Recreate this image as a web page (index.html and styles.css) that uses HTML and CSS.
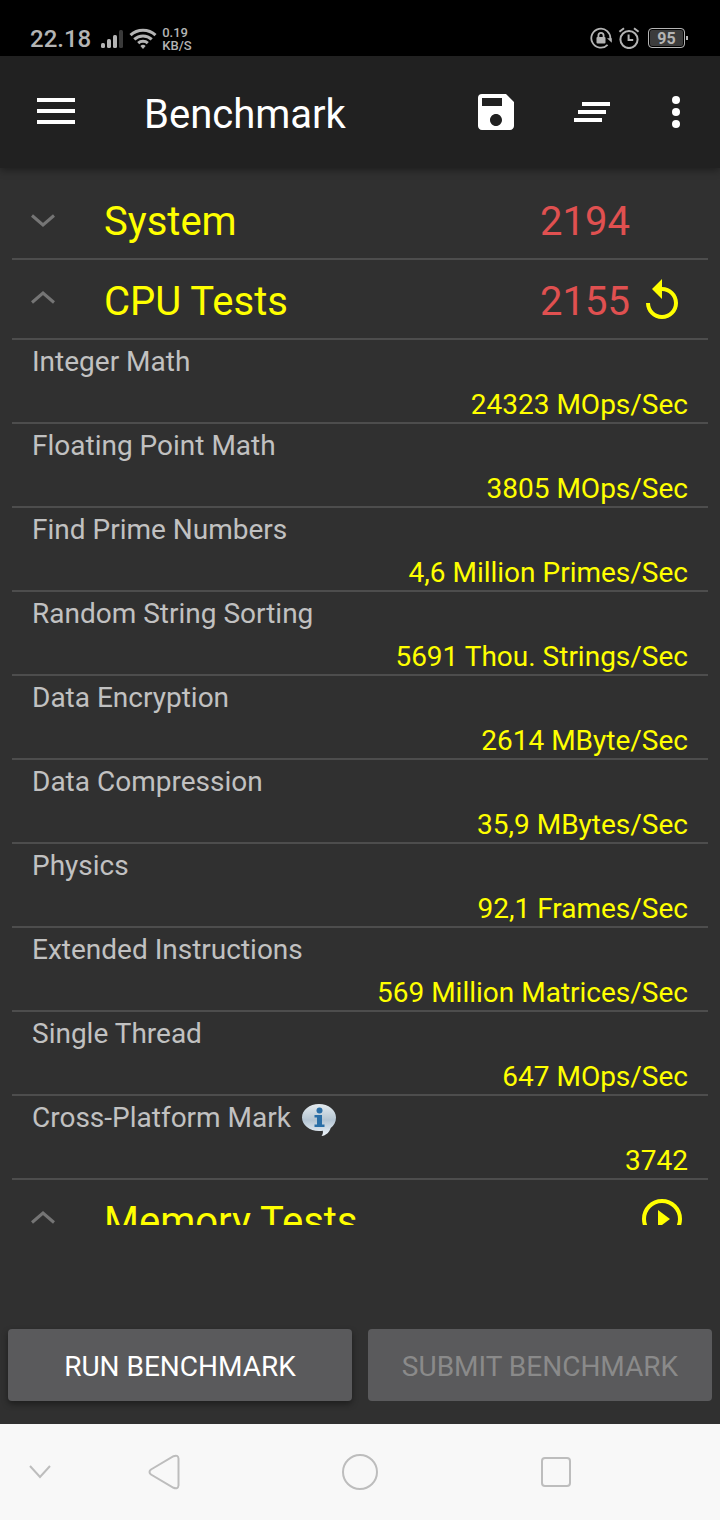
FILE: index.html
```html
<!DOCTYPE html>
<html lang="en">
  <head>
    <meta charset="UTF-8" />
    <meta name="viewport" content="width=device-width, initial-scale=1" />
    <title>Benchmark</title>
    <link rel="stylesheet" href="styles.css">
  </head>
  <body>
    <!-- Status bar -->
    <div class="status-bar">
      <div class="status-left">
        <span class="clock">22.18</span>
        <svg class="signal" width="24" height="20" viewBox="0 0 24 20" fill="#b4b4b4">
          <rect x="1" y="14" width="4" height="5" rx="1.5" />
          <rect x="7" y="10" width="4" height="9" rx="1.5" />
          <rect x="13" y="6" width="4" height="13" rx="1.5" />
          <rect x="19" y="1" width="4" height="18" rx="1.5" fill="#3a3a3a" />
        </svg>
        <svg class="wifi" width="28" height="22" viewBox="0 0 28 22" fill="none" stroke="#b4b4b4" stroke-width="3">
          <path d="M1.5 7.2a18 18 0 0 1 25 0" />
          <path d="M5.3 11.4a12.6 12.6 0 0 1 17.4 0" />
          <path d="M9.2 15.2a7 7 0 0 1 9.6 0" />
          <path d="M14 21l-2.6-3a3.6 3.6 0 0 1 5.2 0z" fill="#b4b4b4" stroke="none" />
        </svg>
        <span class="net-speed">0.19<br>KB/S</span>
      </div>

      <div class="status-right">
        <svg width="22" height="22" viewBox="0 0 22 22" fill="none" stroke="#b4b4b4" stroke-width="1.8">
          <path d="M17.6 17.8A9.5 9.5 0 1 1 20.3 12" />
          <path d="M17 11.2h4.8v4.6z" fill="#b4b4b4" stroke="none" />
          <rect x="6.5" y="10" width="9" height="6.5" rx="1" fill="#b4b4b4" stroke="none" />
          <path d="M8.4 10.5V8.4a2.6 2.6 0 0 1 5.2 0v2.1" />
        </svg>
        <svg width="22" height="22" viewBox="0 0 22 22" fill="none" stroke="#b4b4b4" stroke-width="2">
          <circle cx="11" cy="12.5" r="8.6" />
          <path d="M10.6 7.6V13h4.6M1.4 4.8L6 1.2M20.6 4.8L16 1.2" />
        </svg>
        <div class="battery">95</div>
      </div>
    </div>

    <!-- App bar -->
    <header class="app-bar">
      <button class="icon-button menu-button" aria-label="Menu">
        <svg width="48" height="48" viewBox="0 0 48 48" fill="#fff">
          <path d="M5 10h38v4H5zM5 21h38v4H5zM5 32h38v4H5z" />
        </svg>
      </button>
      <h1 class="app-title">Benchmark</h1>
      <button class="icon-button action-button" aria-label="Save">
        <svg width="48" height="48" viewBox="0 0 24 24" fill="#fff">
          <path d="M17 3H5a2 2 0 0 0-2 2v14c0 1.1.9 2 2 2h14c1.1 0 2-.9 2-2V7l-4-4zm-5 16c-1.66 0-3-1.34-3-3s1.34-3 3-3 3 1.34 3 3-1.34 3-3 3zm3-10H5V5h10v4z" />
        </svg>
      </button>
      <button class="icon-button action-button" aria-label="Clear all">
        <svg width="48" height="48" viewBox="0 0 24 24" fill="#fff">
          <path d="M5 13h14v-2H5v2zm-2 4h14v-2H3v2zM7 7v2h14V7H7z" />
        </svg>
      </button>
      <button class="icon-button more-button" aria-label="More options">
        <svg width="48" height="48" viewBox="0 0 24 24" fill="#fff">
          <circle cx="12" cy="6" r="2" /><circle cx="12" cy="12" r="2" /><circle cx="12" cy="18" r="2" />
        </svg>
      </button>
    </header>

    <main class="results">
      <div class="group">
        <button class="group-toggle" aria-expanded="false">
          <svg class="chevron" width="48" height="48" viewBox="0 0 48 48">
            <path d="M13 18.5l11 9.5 11-9.5" />
          </svg>
          <span class="group-name">System</span>
          <span class="score">2194</span>
        </button>
      </div>

      <div class="group">
        <button class="group-toggle" aria-expanded="true">
          <svg class="chevron" width="48" height="48" viewBox="0 0 48 48">
            <path d="M13 25.5l11-9.5 11 9.5" />
          </svg>
          <span class="group-name">CPU Tests</span>
          <span class="score">2155</span>
        </button>
        <button class="icon-button" aria-label="Run CPU tests again">
          <svg width="48" height="48" viewBox="0 0 24 24" fill="#ff0">
            <path d="M12 5V1L7 6l5 5V7c3.31 0 6 2.69 6 6s-2.69 6-6 6-6-2.69-6-6H4c0 4.42 3.58 8 8 8s8-3.58 8-8-3.58-8-8-8z" />
          </svg>
        </button>
      </div>

      <dl class="tests">
        <div class="test"><dt>Integer Math</dt><dd>24323 MOps/Sec</dd></div>
        <div class="test"><dt>Floating Point Math</dt><dd>3805 MOps/Sec</dd></div>
        <div class="test"><dt>Find Prime Numbers</dt><dd>4,6 Million Primes/Sec</dd></div>
        <div class="test"><dt>Random String Sorting</dt><dd>5691 Thou. Strings/Sec</dd></div>
        <div class="test"><dt>Data Encryption</dt><dd>2614 MByte/Sec</dd></div>
        <div class="test"><dt>Data Compression</dt><dd>35,9 MBytes/Sec</dd></div>
        <div class="test"><dt>Physics</dt><dd>92,1 Frames/Sec</dd></div>
        <div class="test"><dt>Extended Instructions</dt><dd>569 Million Matrices/Sec</dd></div>
        <div class="test"><dt>Single Thread</dt><dd>647 MOps/Sec</dd></div>
        <div class="test">
          <dt>
            Cross-Platform Mark
            <svg class="info" width="36" height="34" viewBox="0 0 36 34">
              <defs>
                <linearGradient id="bubble" x1="0" y1="0" x2="0" y2="1">
                  <stop offset="0" stop-color="#e4ebf0" />
                  <stop offset="0.42" stop-color="#bccbd6" />
                  <stop offset="0.5" stop-color="#b3c4d2" />
                  <stop offset="1" stop-color="#eef4fa" />
                </linearGradient>
              </defs>
              <path d="M18 1C8.500 1 1 7 1 14.500S8.500 28 18 28c1.500 0 2.800-.1 3.800-.3.500 2-.3 4-1.300 5.300 4.500-.5 8-3.800 9.200-8C33 22.500 35 19 35 14.500 35 7 27.500 1 18 1z" fill="url(#bubble)" />
              <circle cx="18.500" cy="7.500" r="3" fill="#2a6ea6" />
              <path d="M13.500 12h7.500v9.500h2.500V24h-10v-2.500H16v-7h-2.500z" fill="#2a6ea6" />
            </svg>
          </dt>
          <dd>3742</dd>
        </div>
      </dl>

      <div class="group">
        <button class="group-toggle" aria-expanded="true">
          <svg class="chevron" width="48" height="48" viewBox="0 0 48 48">
            <path d="M13 25.5l11-9.5 11 9.5" />
          </svg>
          <span class="group-name">Memory Tests</span>
        </button>
        <button class="icon-button" aria-label="Run memory tests">
          <svg width="48" height="48" viewBox="0 0 48 48">
            <circle cx="24" cy="22" r="18" fill="none" stroke="#ff0" stroke-width="4" />
            <path d="M20 13l12 9-12 9z" fill="#ff0" />
          </svg>
        </button>
      </div>
    </main>

    <footer class="footer">
      <button class="footer-button">RUN BENCHMARK</button>
      <button class="footer-button" disabled>SUBMIT BENCHMARK</button>
    </footer>

    <!-- System navigation -->
    <nav class="nav-bar">
      <button class="icon-button" aria-label="Hide navigation bar">
        <svg width="40" height="40" viewBox="0 0 40 40"><path d="M10 14l10 11 10-11" /></svg>
      </button>
      <button class="icon-button" aria-label="Back">
        <svg width="40" height="40" viewBox="0 0 40 40"><path d="M7 17.500L29.500 4.200Q34 2.500 34.500 6.500v27Q34 37.500 29.500 35.800L7 22.500Q4 20 7 17.500z" /></svg>
      </button>
      <button class="icon-button" aria-label="Home">
        <svg width="40" height="40" viewBox="0 0 40 40"><circle cx="20" cy="20" r="17" /></svg>
      </button>
      <button class="icon-button" aria-label="Recent apps">
        <svg width="40" height="40" viewBox="0 0 40 40"><rect x="6" y="6" width="28" height="28" rx="3" /></svg>
      </button>
    </nav>
  </body>
</html>
```
FILE: styles.css
```css
body {
  margin: 0;
  height: 100vh;
  display: flex;
  flex-direction: column;
  background: #303030;
  color: #c1c1c1;
  font-family: Roboto, sans-serif;
  font-size: 28px;
}
button {
  padding: 0;
  border: none;
  background: none;
  color: inherit;
  font: inherit;
  cursor: pointer;
}
svg {
  display: block;
  flex: none;
}
.icon-button {
  display: flex;
  align-items: center;
  justify-content: center;
}

/* Status bar */
.status-bar {
  display: flex;
  align-items: center;
  justify-content: space-between;
  flex: none;
  height: 56px;
  box-sizing: border-box;
  padding: 20px 35px 0 30px;
  background: #000;
  color: #b4b4b4;
}
.status-left {
  display: flex;
  align-items: center;
  padding-top: 2px;
}
.clock {
  font-size: 24px;
  font-weight: 500;
}
.signal {
  margin-left: 9px;
}
.wifi {
  margin-left: 5px;
}
.net-speed {
  margin-left: 5px;
  font-size: 13px;
  font-weight: 500;
  line-height: 13px;
}
.status-right {
  display: flex;
  align-items: center;
  gap: 6px;
}
.battery {
  position: relative;
  width: 37px;
  height: 20px;
  margin-left: 2px;
  box-sizing: border-box;
  border: 1px solid #b4b4b4;
  border-radius: 4px;
  background: #3c3c3c;
  box-shadow: inset 0 0 0 1px #000;
  font-size: 16px;
  font-weight: 700;
  line-height: 19px;
  text-align: center;
}
.battery::after {
  content: "";
  position: absolute;
  top: 7px;
  right: -4px;
  width: 2px;
  height: 4px;
  background: #b4b4b4;
}

/* App bar */
.app-bar {
  position: relative;
  display: flex;
  align-items: center;
  flex: none;
  height: 112px;
  padding: 0 8px 0 32px;
  background: #212121;
  color: #fff;
  box-shadow: 0 2px 8px rgba(0, 0, 0, 0.4);
}
.app-title {
  flex: 1;
  margin: 4px 0 0 64px;
  font-size: 40px;
  font-weight: 400;
}
.action-button {
  width: 96px;
}
.more-button {
  width: 72px;
}

/* Results */
.results {
  flex: 1;
  min-height: 0;
  overflow: hidden;
  padding: 12px 12px 0;
}
.group {
  display: flex;
  align-items: center;
  height: 80px;
  box-sizing: border-box;
  padding: 4px 22px 0 7px;
  border-bottom: 2px solid #4d4d4d;
}
.group-toggle {
  display: flex;
  align-items: center;
  flex: 1;
  font-size: 40px;
  text-align: left;
}
.group:first-child {
  padding-right: 70px;
}
.chevron {
  fill: none;
  stroke: #757575;
  stroke-width: 3;
}
.group-name {
  flex: 1;
  margin-left: 37px;
  color: #ff0;
}
.score {
  width: 98px;
  color: #e05050;
}

.tests {
  margin: 0;
}
.test {
  padding: 0 20px;
  border-bottom: 2px solid #4d4d4d;
}
.test dt {
  display: flex;
  align-items: center;
  height: 42px;
}
.test dd {
  margin: 0;
  padding-top: 4px;
  color: #ff0;
  line-height: 38px;
  height: 36px;
  text-align: right;
}
.info {
  margin: 6px 0 0 10px;
}

/* Footer buttons */
.footer {
  display: flex;
  flex: none;
  gap: 16px;
  padding: 104px 8px 23px;
}
.footer-button {
  flex: 1;
  height: 72px;
  padding-top: 3px;
  border-radius: 4px;
  background: #5a5a5c;
  color: #fff;
  box-shadow: 0 3px 6px rgba(0, 0, 0, 0.4);
}
.footer-button:disabled {
  color: #8a8a8a;
  box-shadow: none;
  cursor: default;
}

/* System navigation */
.nav-bar {
  display: grid;
  grid-template-columns: 10fr 21fr 28fr 21fr 10fr;
  flex: none;
  height: 96px;
  background: #f8f8f8;
}
.nav-bar svg {
  fill: none;
  stroke: #bdbdbd;
  stroke-width: 2;
}
```
